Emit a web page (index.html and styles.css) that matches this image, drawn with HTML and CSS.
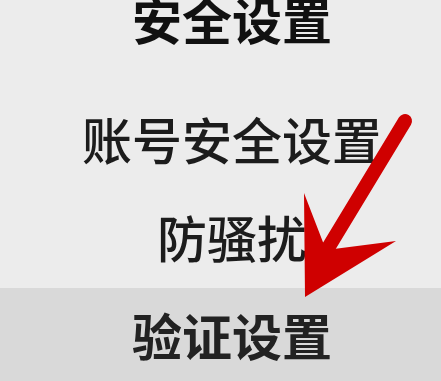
FILE: index.html
```html
<!DOCTYPE html>
<html lang="zh-CN">
<head>
<meta charset="utf-8">
<link rel="stylesheet" href="styles.css">
</head>
<body>
<div class="page">
  <div class="header"><span class="label">安全设置</span></div>
  <ul class="menu">
    <li class="item"><span class="label">账号安全设置</span></li>
    <li class="item"><span class="label">防骚扰</span></li>
    <li class="item active"><span class="label">验证设置</span></li>
  </ul>
  <svg class="arrow" width="441" height="381" viewBox="0 0 441 381">
    <line x1="405" y1="121" x2="322" y2="258" stroke="#cf0000" stroke-width="14" stroke-linecap="round"/>
    <polygon points="304,193 326,250 396,241 305,297" fill="#cf0000"/>
  </svg>
</div>
</body>
</html>
```
FILE: styles.css
```css
html, body {
  margin: 0;
  padding: 0;
  background: #ececec;
}
.page {
  position: relative;
  width: 441px;
  height: 381px;
  overflow: hidden;
  font-family: "Noto Sans CJK SC", "Noto Sans", sans-serif;
  color: #1c1c1c;
}
.header {
  height: 92px;
  padding-left: 23px;
  display: flex;
  justify-content: center;
  align-items: flex-start;
  font-size: 50px;
  font-weight: 700;
  line-height: 36px;
  color: #111;
}
.menu {
  list-style: none;
  margin: 0;
  padding: 0;
}
.item {
  height: 98px;
  padding-left: 23px;
  display: flex;
  justify-content: center;
  align-items: flex-start;
  font-size: 50px;
  font-weight: 500;
  line-height: 92px;
}
.item.active {
  background: #d9d9d9;
  font-weight: 700;
  color: #222;
}
.arrow {
  position: absolute;
  left: 0;
  top: 0;
}
```
